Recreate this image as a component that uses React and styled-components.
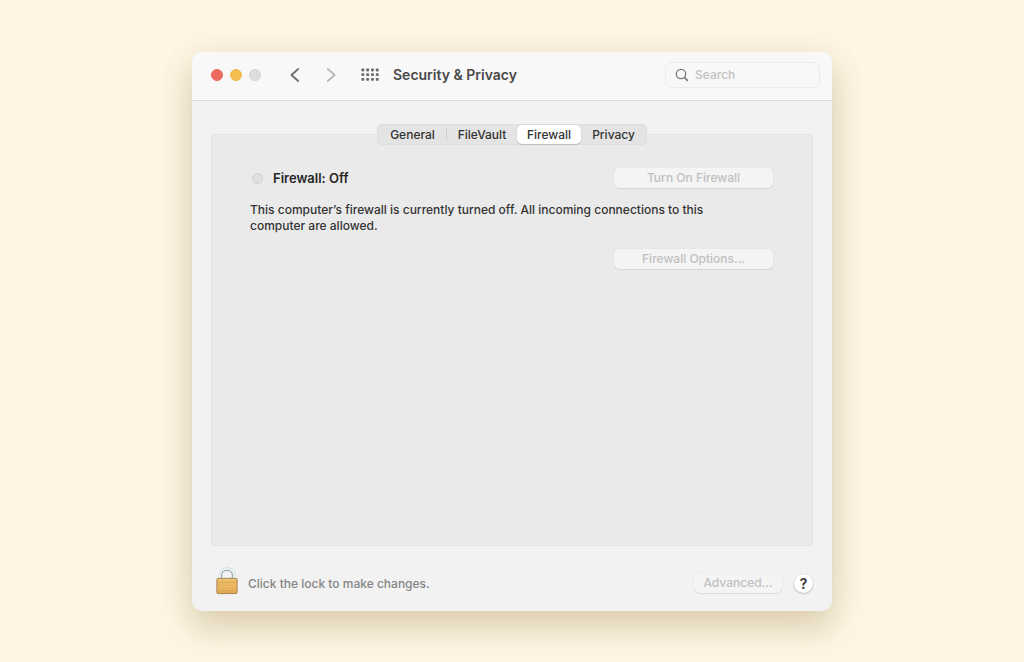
import React, { useState } from "react";
import styled, { createGlobalStyle } from "styled-components";

const GlobalStyle = createGlobalStyle`
  *, *::before, *::after { box-sizing: border-box; }
  body {
    margin: 0;
    background: #fef5e3;
    font-family: Inter, "Liberation Sans", sans-serif;
    font-size: 12px;
    font-weight: 500;
    line-height: 16px;
    color: #333;
  }
  button, input { font: inherit; color: inherit; }
`;

const Page = styled.main`
  min-height: 100vh;
  padding: 52px 24px 51px;
  display: flex;
  justify-content: center;
`;

const Window = styled.section`
  width: 100%;
  max-width: 640px;
  display: flex;
  flex-direction: column;
  border-radius: 10px;
  background: #f2f2f2;
  box-shadow: 0 16px 32px rgba(110, 80, 20, 0.22), 0 4px 40px rgba(110, 80, 20, 0.06);
`;

const TitleBar = styled.header`
  display: flex;
  align-items: center;
  height: 49px;
  padding: 0 12px 2px 19px;
  border-bottom: 1px solid #dadada;
  border-radius: 10px 10px 0 0;
  background: #f8f8f8;
`;

const TrafficLights = styled.div`
  display: flex;
  gap: 7px;
`;

const Light = styled.button`
  width: 12px;
  height: 12px;
  padding: 0;
  border: 1px solid ${(p) => p.$edge};
  border-radius: 50%;
  background: ${(p) => p.$color};
`;

const NavButtons = styled.nav`
  display: flex;
  gap: 16px;
  margin-left: 24px;
`;

const IconButton = styled.button`
  display: flex;
  align-items: center;
  justify-content: center;
  width: 20px;
  height: 20px;
  padding: 0;
  border: 0;
  background: none;
  color: ${(p) => p.$color || "#6b6b6b"};
`;

const GridButton = styled(IconButton)`
  margin-left: 19px;
`;

const Title = styled.h1`
  flex: 1;
  margin: 0 0 0 13px;
  font-size: 14px;
  line-height: 20px;
  font-weight: 600;
  color: #4a4a4a;
`;

const SearchField = styled.label`
  display: flex;
  align-items: center;
  gap: 6px;
  width: 155px;
  height: 26px;
  padding: 0 9px;
  border: 1px solid #ececec;
  border-radius: 6px;
  color: #777;
`;

const SearchInput = styled.input`
  flex: 1;
  min-width: 0;
  padding: 0;
  border: 0;
  outline: 0;
  background: none;
  &::placeholder { color: #c2c2c2; opacity: 1; }
`;

const Content = styled.div`
  flex: 1;
  display: flex;
  flex-direction: column;
  padding: 23px 19px 0;
`;

const TabList = styled.div`
  position: relative;
  z-index: 1;
  align-self: center;
  display: grid;
  grid-template-columns: 69px 70px 64px 65px;
  height: 21px;
  margin-bottom: -11px;
  padding: 1px;
  border-radius: 5px;
  background: #e4e4e4;
  box-shadow: inset 0 0 0 1px #dedede;
`;

const Tab = styled.button`
  padding: 0;
  border: 0;
  border-radius: 5px;
  background: ${(p) => (p.$selected ? "#fff" : "none")};
  box-shadow: ${(p) => (p.$selected ? "0 0 1px rgba(0, 0, 0, 0.2), 0 1px 1px rgba(0, 0, 0, 0.14)" : "none")};
  line-height: 18px;
  position: relative;
  &::after {
    content: "";
    display: ${(p) => (p.$divider ? "block" : "none")};
    position: absolute;
    top: 4px;
    right: 0;
    width: 1px;
    height: 11px;
    background: #cdcdcd;
  }
`;

const Panel = styled.div`
  flex: 1;
  padding: 33px 39px 33px 38px;
  border: 1px solid #e3e3e3;
  border-radius: 5px;
  background: #eaeaea;
`;

const StatusRow = styled.div`
  display: flex;
  align-items: center;
  justify-content: space-between;
`;

const Status = styled.h2`
  display: flex;
  align-items: center;
  gap: 10px;
  margin: 0;
  padding-left: 2px;
  font-size: 13px;
  font-weight: 600;
  color: #262626;
`;

const StatusDot = styled.span`
  width: 11px;
  height: 11px;
  border: 1px solid #d2d2d2;
  border-radius: 50%;
  background: #e0e0e0;
`;

const Description = styled.p`
  max-width: 480px;
  margin: 14px 0 15px;
`;

const OptionsRow = styled.div`
  display: flex;
  justify-content: flex-end;
`;

const PushButton = styled.button`
  width: ${(p) => (p.$small ? "88px" : "159px")};
  height: 20px;
  padding: 0;
  border: 0;
  border-radius: 5px;
  background: #f4f4f4;
  box-shadow: 0 0 1px rgba(0, 0, 0, 0.14), 0 1px 1px rgba(0, 0, 0, 0.08);
  line-height: 20px;
  color: #c0c0c0;
`;

const Footer = styled.footer`
  display: flex;
  align-items: center;
  height: 65px;
  padding: 9px 19px 0 24px;
`;

const LockButton = styled.button`
  display: flex;
  padding: 0 0 4px;
  border: 0;
  background: none;
`;

const LockHint = styled.span`
  flex: 1;
  margin-left: 10px;
  padding-top: 1px;
  color: #858585;
`;

const HelpButton = styled.button`
  width: 19px;
  height: 19px;
  margin-left: 12px;
  padding: 0;
  border: 0;
  border-radius: 50%;
  background: #fff;
  box-shadow: 0 0 1px rgba(0, 0, 0, 0.2), 0 1px 2px rgba(0, 0, 0, 0.2);
  font-size: 14px;
  line-height: 19px;
  font-weight: 600;
`;

function Chevron({ flip }) {
  return (
    <svg width="10" height="16" viewBox="0 0 10 16" fill="none" stroke="currentColor" strokeWidth="1.7" strokeLinecap="round" strokeLinejoin="round" aria-hidden="true">
      <path d={flip ? "M1.8 2L8.6 8L1.8 14" : "M8.2 2L1.4 8L8.2 14"} />
    </svg>
  );
}

function DotGrid() {
  const cells = [];
  for (let row = 0; row < 3; row += 1) {
    for (let col = 0; col < 4; col += 1) {
      cells.push(<rect key={`${row}-${col}`} x={0.4 + col * 4.8} y={0.5 + row * 4.7} width="2.9" height="2.9" rx="0.8" />);
    }
  }
  return (
    <svg width="19" height="14" viewBox="0 0 19 14" fill="currentColor" aria-hidden="true">
      {cells}
    </svg>
  );
}

function SearchIcon() {
  return (
    <svg width="14" height="14" viewBox="0 0 14 14" fill="none" stroke="currentColor" strokeLinecap="round" aria-hidden="true">
      <circle cx="6" cy="6" r="4.7" strokeWidth="1.3" />
      <path d="M9.5 9.5L12.3 12.3" strokeWidth="1.7" />
    </svg>
  );
}

function Padlock() {
  return (
    <svg width="22" height="28" viewBox="0 0 22 28" aria-hidden="true">
      <defs>
        <linearGradient id="brass" x1="0" y1="0" x2="0" y2="1">
          <stop offset="0" stopColor="#e6b565" />
          <stop offset="0.5" stopColor="#f0bf68" />
          <stop offset="1" stopColor="#dfa550" />
        </linearGradient>
      </defs>
      <path d="M4.2 12V7.8C4.2 4 7 1.8 11 1.8S17.8 4 17.8 7.8V12" fill="none" stroke="#cdd6d9" strokeWidth="3" />
      <path d="M4.2 12V7.8C4.2 4 7 1.8 11 1.8S17.8 4 17.8 7.8V12" fill="none" stroke="#eef4f5" strokeWidth="1.8" />
      <path d="M5.7 12V8C5.7 5 8 3.4 11 3.4S16.3 5 16.3 8V12" fill="none" stroke="#929fa4" strokeWidth="1" />
      <rect x="0.9" y="11.4" width="20.2" height="15.2" rx="1" fill="url(#brass)" stroke="#a67a42" strokeWidth="0.9" />
      <path d="M1.5 12.6H20.5" stroke="#f3cf8a" strokeWidth="0.8" />
      <path d="M1.5 15.5H20.5M1.5 18.2H20.5M1.5 20.9H20.5M1.5 23.6H20.5" stroke="#d7a04c" strokeWidth="0.6" />
    </svg>
  );
}

const tabs = ["General", "FileVault", "Firewall", "Privacy"];

export default function App() {
  const [active, setActive] = useState("Firewall");
  return (
    <>
      <GlobalStyle />
      <Page>
        <Window aria-labelledby="window-title">
          <TitleBar>
            <TrafficLights>
              <Light aria-label="Close" $color="#ed6a5f" $edge="#e8685d" />
              <Light aria-label="Minimize" $color="#f4bf4f" $edge="#eeb94d" />
              <Light aria-label="Zoom" disabled $color="#dddddd" $edge="#d3d3d3" />
            </TrafficLights>
            <NavButtons aria-label="History">
              <IconButton aria-label="Back"><Chevron /></IconButton>
              <IconButton aria-label="Forward" disabled $color="#b8b8b8"><Chevron flip /></IconButton>
            </NavButtons>
            <GridButton aria-label="Show all"><DotGrid /></GridButton>
            <Title id="window-title">Security &amp; Privacy</Title>
            <SearchField>
              <SearchIcon />
              <SearchInput type="search" placeholder="Search" aria-label="Search" />
            </SearchField>
          </TitleBar>
          <Content>
            <TabList role="tablist">
              {tabs.map((name) => (
                <Tab
                  key={name}
                  role="tab"
                  aria-selected={active === name}
                  $selected={active === name}
                  $divider={name === "General"}
                  onClick={() => setActive(name)}
                >
                  {name}
                </Tab>
              ))}
            </TabList>
            <Panel role="tabpanel">
              <StatusRow>
                <Status><StatusDot />Firewall: Off</Status>
                <PushButton disabled>Turn On Firewall</PushButton>
              </StatusRow>
              <Description>
                This computer’s firewall is currently turned off. All incoming connections to this computer are allowed.
              </Description>
              <OptionsRow>
                <PushButton disabled>Firewall Options...</PushButton>
              </OptionsRow>
            </Panel>
          </Content>
          <Footer>
            <LockButton aria-label="Unlock"><Padlock /></LockButton>
            <LockHint>Click the lock to make changes.</LockHint>
            <PushButton $small disabled>Advanced...</PushButton>
            <HelpButton aria-label="Help">?</HelpButton>
          </Footer>
        </Window>
      </Page>
    </>
  );
}
